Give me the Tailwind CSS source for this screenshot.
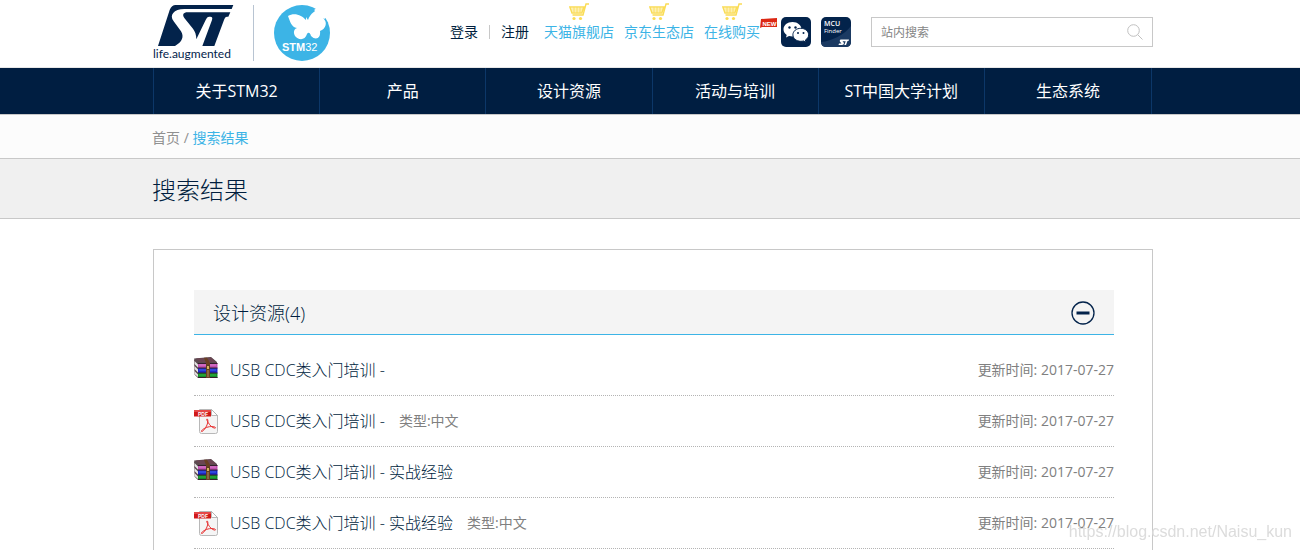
<!DOCTYPE html>
<html lang="zh-CN">
<head>
<meta charset="utf-8">
<meta name="viewport" content="width=device-width, initial-scale=1">
<title>搜索结果</title>
<script src="https://cdn.jsdelivr.net/npm/@tailwindcss/browser@4"></script>
</head>
<body class="flex min-h-screen flex-col bg-white font-['Open_Sans','Noto_Sans_CJK_SC',sans-serif] text-sm text-[#001e3e]">

<svg class="hidden" aria-hidden="true">
  <symbol id="cart" viewBox="0 0 21 18">
    <path d="M20 1h-3l-3 11H3.500M.8 4h14l-2 6H3z" fill="none" stroke="#fadc55" stroke-width="1.400"/>
    <path d="M1.500 6h12.500M2.300 8h11M5 4v6M8 4v6M11 4v6" stroke="#fadc55" stroke-width=".9"/>
    <circle cx="5" cy="15.500" r="1.600" fill="#fadc55"/><circle cx="11.500" cy="15.500" r="1.600" fill="#fadc55"/>
  </symbol>
  <symbol id="archive" viewBox="0 0 24 22">
    <path d="M0 2 4 6.500V21L.5 17.500zM0 1.500 17 0l6 5v3H4z" fill="#5c4a50"/>
    <path d="M.5 4 4 7.500v3L.5 7zM.5 9 4 12.500v3L.5 12zM.5 14 4 17.500v2.500L.5 17z" fill="#e4e4e4"/>
    <path d="M2 1.500 17 .5l5 4.500H6z" fill="#6b4552"/>
    <path d="M4 6h19.500v5H4z" fill="#c050b0"/><path d="M4 11h19.500v5H4z" fill="#1c28c8"/><path d="M4 16h19.500v5H4z" fill="#148c28"/>
    <path d="M4 6.500h19.500M4 11h19.500M4 16h19.500M4 20.500h19.500" stroke="#35202c" stroke-width="1"/>
    <path d="M5 8h17" stroke="#dd80cf"/><path d="M5 13h17" stroke="#4068ee"/><path d="M5 18h17" stroke="#30b840"/>
    <path d="M10 .8h3l3 5.200v15h-4V6z" fill="#6a4022"/>
    <path d="M12.500 8.500h3v4h-3z" fill="#d8b060" stroke="#4a3018" stroke-width=".8"/><path d="M14 13v7" stroke="#b09060"/>
  </symbol>
  <symbol id="pdf" viewBox="0 0 24 25">
    <path d="M5.500.5h12l6 6v16q0 2-2 2h-14q-2 0-2-2z" fill="#f5f5f5" stroke="#b8b8b8"/>
    <path d="M17.500.5v6h6z" fill="#fff" stroke="#aaa" stroke-width=".8"/>
    <path d="M0 1h17v6.500H0z" fill="#d01818"/><path d="M0 1h17v2H0z" fill="#e64848"/>
    <text x="4" y="6.500" font-size="5" font-weight="700" fill="#fff" font-family="Liberation Sans">PDF</text>
    <path d="M13 10c1.500 0 1 4-.5 7S8.500 23 7.500 22.500s2.500-3.500 6.500-4.500 7.500-.3 7.500.8-4-.3-6-3.300-3.500-5.500-2.500-5.500z" fill="none" stroke="#e83030"/>
  </symbol>
</svg>

<header class="h-[68px] border-b border-[#e8e8e8]">
  <div class="mx-auto flex max-w-[1006px] items-start pl-[6px]">
    <a href="#" aria-label="ST life.augmented" class="mt-1 flex w-[81px] flex-col text-[#03234b]">
      <svg class="h-[42px] w-[81px]" viewBox="24 12 243 126">
        <path d="M92 15H265L260 27H118C86 27 72 46 86 64L108 94C118 110 112 126 90 138H39L74 30Q80 15 92 15Z" fill="#03234b"/>
        <path d="M128 37H256L250 50H246Q240 50 237 60L208 138H172L201 60Q204 50 196 50H192Q186 50 182 60L154 118C154 104 150 94 144 86L118 54C111 44 115 37 128 37Z" fill="#03234b"/>
      </svg>
      <span class="font-[Lato,sans-serif] text-xs leading-4">life.augmented</span>
    </a>
    <span class="mt-[5px] ml-[19px] h-14 w-px bg-[#b8c4d2]"></span>
    <a href="#" aria-label="STM32" class="mt-[5px] ml-5">
      <svg class="size-14" viewBox="0 0 56 56">
        <circle cx="28" cy="28" r="28" fill="#3cb4e6"/>
        <path d="M40 5C44 2 48 2 50 5L55 11L50 14Z" fill="#fff"/>
        <path d="M14 11C20 7 28 10 32 15L32 12L34 15C36 9 42 4 48 3Q52 7 49 13C54 17 52 24 46 26C47 33 42 36 37 31C36 27 34 27 33 29C31 36 24 35 21 31C19 27 20 24 23 23C17 22 16 16 14 11Z" fill="#fff"/>
        <text x="8" y="46" font-family="Liberation Sans" font-size="11" fill="#fff"><tspan font-weight="700">STM</tspan>32</text>
      </svg>
    </a>
    <div class="mt-[22px] mr-px ml-auto flex items-center leading-5">
      <a href="#">登录</a>
      <span class="mx-[11px] h-[14px] w-px bg-[#c8c8c8]"></span>
      <a href="#">注册</a>
      <a href="#" class="relative ml-[15px] text-[#3cb4e6]">天猫旗舰店<svg class="absolute -top-[19px] left-[25px] h-[18px] w-[21px]"><use href="#cart"/></svg></a>
      <a href="#" class="relative ml-[10px] text-[#3cb4e6]">京东生态店<svg class="absolute -top-[19px] left-[25px] h-[18px] w-[21px]"><use href="#cart"/></svg></a>
      <a href="#" class="relative ml-[10px] text-[#3cb4e6]">在线购买<svg class="absolute -top-[19px] left-[18px] h-[18px] w-[21px]"><use href="#cart"/></svg>
        <svg class="absolute -top-1 left-14 h-[10px] w-[17px]" viewBox="0 0 17 10"><path d="M1 1 17 0V9H2L0 10Z" fill="#dc2814"/><text x="2.500" y="7.500" font-family="Liberation Sans" font-size="6" font-weight="700" fill="#fff">NEW</text></svg></a>
    </div>
    <a href="#" aria-label="微信" class="mt-[17px] ml-5">
      <svg class="size-[30px]" viewBox="0 0 30 30"><rect width="30" height="30" rx="5" fill="#03234b"/>
        <path d="M11.500 5C6.400 5 2.500 8.200 2.500 12.300c0 2.400 1.200 4.300 3.200 5.600L5 20.500l3-1.500c1.200.3 2.400.4 3.500.4C16.600 19.400 20.500 16.300 20.500 12.300S16.600 5 11.500 5z" fill="#fff"/>
        <path d="M19.800 11.300c-4.400 0-7.900 2.900-7.900 6.500s3.500 6.500 7.900 6.500c1 0 1.900-.1 2.700-.4l2.600 1.400-.7-2.300c2-1.200 3.200-3 3.200-5.200 0-3.600-3.400-6.500-7.800-6.500z" fill="#fff" stroke="#03234b"/>
        <g fill="#03234b"><circle cx="8.500" cy="10.500" r="1.200"/><circle cx="14.500" cy="10.500" r="1.200"/><circle cx="17" cy="16" r="1"/><circle cx="22.500" cy="16" r="1"/></g></svg>
    </a>
    <a href="#" aria-label="MCU Finder" class="mt-[17px] ml-[10px]">
      <svg class="size-[30px]" viewBox="0 0 30 30"><rect width="30" height="30" rx="5" fill="#03234b"/><path d="M0 25C11 24 23 18 30 9V25Q30 30 25 30H5Q0 30 0 25z" fill="#1b3a62"/>
        <text x="3" y="9" font-family="Open Sans" font-size="7" font-weight="600" fill="#fff">MCU</text>
        <text x="3" y="16" font-family="Open Sans" font-size="6" fill="#fff">Finder</text>
        <path d="M19.500 22.500H28L27.500 24H26.500L25 28H23.300L24.700 24.300H21.500L23 26Q23 28 21 28H17.500L18 26.500H20.500L18.800 24.500Q18.500 23 19.500 22.500Z" fill="#fff"/></svg>
    </a>
    <form class="mt-[17px] ml-5 flex h-[30px] w-[282px] items-center border border-[#c8c8c8]" onsubmit="return false">
      <input type="search" aria-label="站内搜索" placeholder="站内搜索" class="min-w-0 flex-1 bg-transparent pt-px pl-[9px] text-xs outline-none placeholder:text-[#858585]">
      <button type="submit" aria-label="搜索" class="mr-[9px]"><svg class="size-4" viewBox="0 0 16 16" fill="none" stroke="#c0c0c0"><circle cx="6.500" cy="6.500" r="5.800"/><path d="m10.800 10.800 4.700 4.700"/></svg></button>
    </form>
  </div>
</header>

<nav class="bg-[#001e41] text-base text-white">
  <div class="mx-auto max-w-[1006px] pr-px pl-[6px]">
    <div class="grid h-[46px] grid-cols-6 divide-x divide-[#0c3768] border-x border-[#0c3768] text-center leading-[46px]">
      <a href="#">关于STM32</a><a href="#">产品</a><a href="#">设计资源</a><a href="#">活动与培训</a><a href="#">ST中国大学计划</a><a href="#">生态系统</a>
    </div>
  </div>
</nav>

<div class="border-y border-[#c8c8c8] bg-[#fcfcfc]">
  <div class="mx-auto h-[43px] max-w-[1006px] pl-[5px] leading-[45px] text-[#909090]"><a href="#">首页</a> / <a href="#" class="text-[#3cb4e6]">搜索结果</a></div>
</div>
<div class="border-b border-[#c8c8c8] bg-[#f0f0f0]">
  <h1 class="mx-auto h-[59px] max-w-[1006px] pl-[5px] text-2xl leading-[62px] font-light">搜索结果</h1>
</div>

<main class="mx-auto mt-[30px] flex w-full max-w-[1006px] flex-1 pl-[6px]">
  <section class="w-full border border-b-0 border-[#c8c8c8] pt-10 pr-[38px] pl-10">
    <div class="flex h-[45px] items-center justify-between border-b border-[#3cb4e6] bg-[#f4f4f4] px-[19px] pt-px">
      <h2 class="text-lg font-light">设计资源(4)</h2>
      <button type="button" aria-label="收起"><svg class="size-6" viewBox="0 0 24 24" fill="none" stroke="#03234b"><circle cx="12" cy="12" r="11" stroke-width="1.300"/><path d="M5.500 12h13" stroke-width="3"/></svg></button>
    </div>
    <ul class="mt-[10px] text-[#808080]">
      <li class="flex h-[51px] items-center border-b border-dotted border-[#b4b4b4]">
        <svg class="mb-1 h-[22px] w-6"><use href="#archive"/></svg>
        <a href="#" class="ml-3 text-base font-light text-[#001e3e]">USB CDC类入门培训 -</a>
        <span class="ml-auto">更新时间: 2017-07-27</span></li>
      <li class="flex h-[51px] items-center border-b border-dotted border-[#b4b4b4]">
        <svg class="h-[25px] w-6"><use href="#pdf"/></svg>
        <a href="#" class="ml-3 text-base font-light text-[#001e3e]">USB CDC类入门培训 -</a>
        <span class="ml-[14px]">类型:中文</span>
        <span class="ml-auto">更新时间: 2017-07-27</span></li>
      <li class="flex h-[51px] items-center border-b border-dotted border-[#b4b4b4]">
        <svg class="mb-1 h-[22px] w-6"><use href="#archive"/></svg>
        <a href="#" class="ml-3 text-base font-light text-[#001e3e]">USB CDC类入门培训 - 实战经验</a>
        <span class="ml-auto">更新时间: 2017-07-27</span></li>
      <li class="flex h-[51px] items-center border-b border-dotted border-[#b4b4b4]">
        <svg class="h-[25px] w-6"><use href="#pdf"/></svg>
        <a href="#" class="ml-3 text-base font-light text-[#001e3e]">USB CDC类入门培训 - 实战经验</a>
        <span class="ml-[14px]">类型:中文</span>
        <span class="ml-auto">更新时间: 2017-07-27</span></li>
    </ul>
  </section>
</main>
<div class="pointer-events-none fixed right-2 bottom-[6px] font-['Liberation_Sans',sans-serif] text-base text-[#dcdcdc]">https://blog.csdn.net/Naisu_kun</div>
</body>
</html>
